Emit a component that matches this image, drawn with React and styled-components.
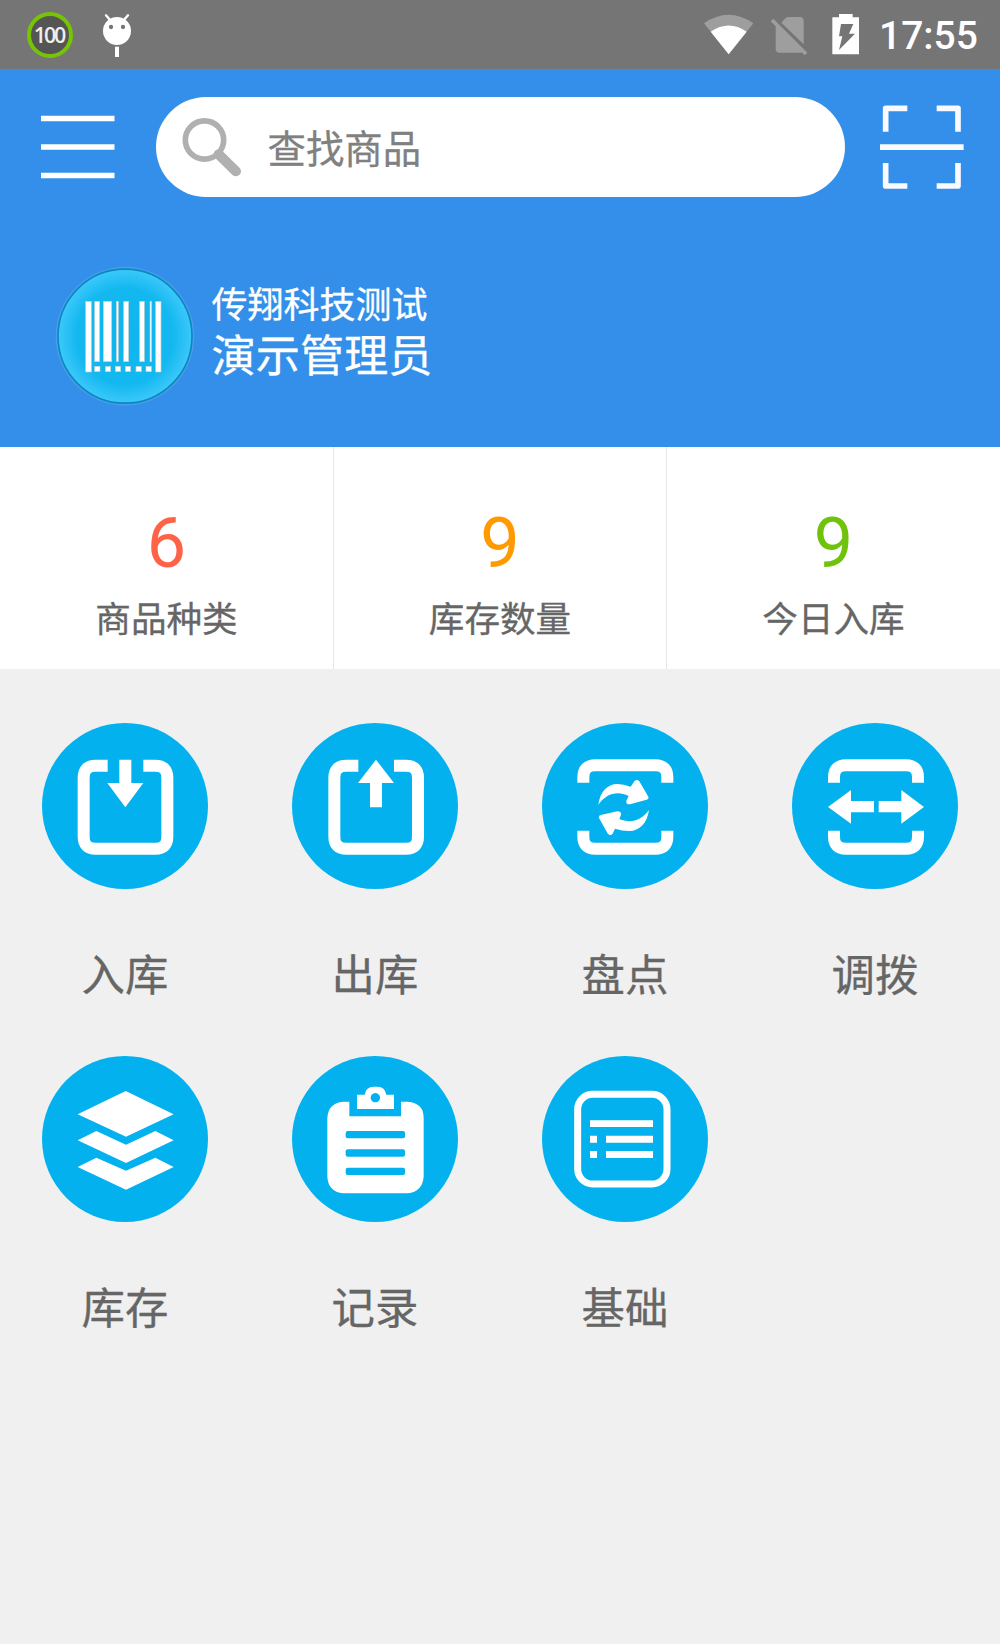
import React from "react";
import styled, { createGlobalStyle } from "styled-components";

const GlobalStyle = createGlobalStyle`
  * {
    box-sizing: border-box;
  }
  body {
    margin: 0;
    background: #f0f0f0;
    font-family: Roboto, "Noto Sans CJK SC", sans-serif;
  }
  svg {
    display: block;
    flex: none;
  }
`;

const colorPrimary = "#338fe9";
const colorIcon = "#02b1ee";
const colorText = "#666";

const Screen = styled.div`
  width: 1000px;
  height: 1644px;
  overflow: hidden;
  background: #f0f0f0;
`;

const StatusBar = styled.div`
  display: flex;
  align-items: center;
  justify-content: space-between;
  height: 69px;
  padding: 0 22px 0 27px;
  background: #757575;
`;

const StatusGroup = styled.div`
  display: flex;
  align-items: center;
  gap: ${(p) => p.$gap}px;
`;

const Percent = styled.div`
  display: flex;
  align-items: center;
  justify-content: center;
  width: 46px;
  height: 46px;
  padding-right: 2px;
  border: 4px solid #76c403;
  border-radius: 50%;
  background: #555;
  color: #eee;
  font: 600 21.5px/1 "Open Sans", sans-serif;
  letter-spacing: -2.2px;
`;

const Clock = styled.span`
  width: 99px;
  padding-top: 3px;
  color: #fff;
  font-size: 39px;
  font-weight: 500;
  line-height: 68px;
  white-space: nowrap;
`;

const Header = styled.header`
  height: 378px;
  padding: 28px 36px 0 41px;
  background: ${colorPrimary};
`;

const Toolbar = styled.div`
  display: flex;
  align-items: center;
  justify-content: space-between;
  height: 100px;
`;

const Search = styled.div`
  display: flex;
  align-items: center;
  width: 689px;
  height: 100px;
  margin-left: 5px;
  padding-left: 26px;
  border-radius: 50px;
  background: #fff;
`;

const SearchText = styled.span`
  margin-left: 26px;
  padding-top: 6px;
  color: #808080;
  font-size: 38.4px;
  line-height: 50px;
  -webkit-text-stroke: 0.3px;
`;

const Profile = styled.div`
  display: flex;
  align-items: center;
  margin-top: 69px;
  margin-left: 14px;
`;

const ProfileInfo = styled.div`
  display: flex;
  flex-direction: column;
  margin-left: 16.5px;
  padding-bottom: 5px;
  color: #fff;
  -webkit-text-stroke: 0.3px;
`;

const Company = styled.span`
  font-size: 36px;
  line-height: 46px;
`;

const UserName = styled.span`
  font-size: 44.2px;
  line-height: 56px;
`;

const Stats = styled.section`
  display: grid;
  grid-template-columns: 334px 333px 333px;
  height: 222px;
  background: #fff;
`;

const Stat = styled.div`
  display: flex;
  flex-direction: column;
  align-items: center;
  padding-top: 55px;
  border-right: 1px solid #e6e6e6;

  &:last-child {
    border-right: 0;
  }
`;

const StatValue = styled.span`
  color: ${(p) => p.$color};
  font-size: 70px;
  line-height: 82px;
`;

const StatLabel = styled.span`
  margin-top: 11px;
  color: ${colorText};
  font-size: 35.6px;
  line-height: 50px;
  -webkit-text-stroke: 0.3px;
`;

const Menu = styled.main`
  display: grid;
  grid-template-columns: repeat(4, 250px);
  grid-auto-rows: 332.5px;
  padding-top: 54px;
`;

const MenuItem = styled.div`
  display: flex;
  flex-direction: column;
  align-items: center;
`;

const Circle = styled.div`
  width: 166px;
  height: 166px;
  border-radius: 50%;
  background: ${colorIcon};
`;

const MenuLabel = styled.span`
  margin-top: 58px;
  color: ${colorText};
  font-size: 43.4px;
  line-height: 60px;
  -webkit-text-stroke: 0.3px;
`;

const AndroidIcon = () => (
  <svg width="30" height="69" viewBox="305 0 90 207">
    <g fill="#fff">
      <circle cx="350" cy="93" r="42" />
      <path d="M344 140h12v31h-12z" />
    </g>
    <path d="M317 46l13 15M383 46l-13 15" stroke="#fff" strokeWidth="7" strokeLinecap="round" />
    <circle cx="332" cy="81" r="6.5" fill="#757575" />
    <circle cx="368" cy="81" r="6.5" fill="#757575" />
  </svg>
);

const WifiIcon = () => (
  <svg width="50" height="69" viewBox="74 0 150 207">
    <path d="M148 163L74 70q74-51 148 0z" fill="#9e9e9e" />
    <path d="M148 163L94 95q54-37 108 0z" fill="#fff" />
  </svg>
);

const NoSimIcon = () => (
  <svg width="38" height="69" viewBox="270 0 114 207">
    <g fill="#9e9e9e">
      <path d="M304 68L317 54q4-3 9-3h33q12 0 12 12v70z" />
      <path d="M287 71l83 83q-4 4-9 4h-62q-12 0-12-12z" />
      <path d="M272 64l8-8 102 102-8 8z" />
    </g>
  </svg>
);

const BatteryIcon = () => (
  <svg width="27" height="69" viewBox="456 0 81 207">
    <path d="M457 52h20V42h41v10h19v111h-80z" fill="#fff" />
    <path d="M483 72h37l-13 29h18l-48 49 10-41h-10z" fill="#757575" />
  </svg>
);

const MenuIcon = () => (
  <svg width="74" height="66" viewBox="0 0 74 66">
    <path d="M0 4.5h73.5M0 33h73.5M0 61.5h73.5" stroke="#fff" strokeWidth="5.6" />
  </svg>
);

const SearchIcon = () => (
  <svg width="60" height="60" viewBox="544 350 180 180" fill="none" stroke="#b0b0b0">
    <circle cx="611.5" cy="419" r="57.5" strokeWidth="17" />
    <path d="M654 462l52 51" strokeWidth="30" strokeLinecap="round" />
  </svg>
);

const ScanIcon = () => (
  <svg width="84" height="84" viewBox="601 315 252 252" fill="none" stroke="#f8faff" strokeWidth="17" strokeLinejoin="round">
    <path d="M683 325h-65v70M771 325h64v70M683 558h-65v-69M771 558h64v-69" />
    <path d="M601 441.5h251" />
  </svg>
);

const bars = [
  [137, 17, 212],
  [164, 15, 181],
  [190, 25, 181],
  [229, 6, 181],
  [251, 15, 181],
  [299, 14, 181],
  [330, 5, 181],
  [347, 16, 212],
];

const dots = [164, 196, 226, 256, 288, 318];

const Barcode = () => (
  <svg width="140" height="140" viewBox="45 47 420 420">
    <defs>
      <radialGradient id="disc">
        <stop offset="0" stopColor="#0fb5ee" />
        <stop offset="0.72" stopColor="#13b8f0" />
        <stop offset="1" stopColor="#3dc8fa" />
      </radialGradient>
    </defs>
    <circle cx="255" cy="257.5" r="208" fill="#4b9cec" />
    <circle cx="255" cy="257.5" r="201" fill="url(#disc)" stroke="#078abf" strokeWidth="5" />
    <g fill="#fff" stroke="#b9cfd4" strokeWidth="2">
      {bars.map(([x, w, h]) => (
        <rect key={x} x={x} y="153" width={w} height={h} />
      ))}
      {dots.map((x) => (
        <rect key={x} x={x} y="348" width="16" height="16" />
      ))}
    </g>
  </svg>
);

const Glyph = ({ top = 39, children }) => (
  <svg width="166" height="166" viewBox={`36 ${top} 498 498`} fill="#fff">
    {children}
  </svg>
);

const OpenBox = () => (
  <path
    d="M233 167H197q-36 0-36 36v177q0 36 36 36h179q36 0 36-36V203q0-36-36-36H340"
    fill="none"
    stroke="#fff"
    strokeWidth="36"
  />
);

const Brackets = () => (
  <path
    d="M160 218V202q0-36 36-36h180q36 0 36 36v16M160 362v18q0 36 36 36h180q36 0 36-36v-18"
    fill="none"
    stroke="#fff"
    strokeWidth="36"
  />
);

const InIcon = () => (
  <Glyph>
    <OpenBox />
    <path d="M268 149h36v70h36l-54 73-54-73h36z" />
  </Glyph>
);

const OutIcon = () => (
  <Glyph>
    <g transform="translate(2 0)">
      <OpenBox />
      <path d="M286 149l54 70h-36v73h-36v-73h-36z" />
    </g>
  </Glyph>
);

const CheckIcon = () => (
  <Glyph>
    <Brackets />
    <path d="M205 284C210 246 232 222 262 222Q282 222 302 230L313 214Q320 206 328 214L355 260Q357 267 350 269L300 283Q287 284 289 272L296 258C262 242 230 250 205 284z" />
    <path d="M357 300C351 340 329 363 298 363Q275 363 255 356L248 371Q242 379 234 372L207 324Q205 317 212 315L262 304Q275 304 273 315L268 327C302 341 334 332 357 300z" />
  </Glyph>
);

const TransferIcon = () => (
  <Glyph top={37}>
    <g transform="translate(2 -2)">
      <Brackets />
      <path d="M142 291l69-51v33h69v34h-69v34zM430 291l-68-51v33h-68v34h68v34z" />
    </g>
  </Glyph>
);

const StockIcon = () => (
  <Glyph top={31}>
    <path d="M287 136l144 70-143 67-145-67z" />
    <path d="M143 284l56-28 89 41 88-41 55 28-143 68z" />
    <path d="M143 364l56-28 89 39 88-39 55 28-143 68z" />
  </Glyph>
);

const RecordIcon = () => (
  <Glyph top={31}>
    <path d="M189 168h19v44h155v-44h20q48 4 48 48v178q-4 44-48 49H189q-44-5-47-49V216q3-44 47-48z" />
    <path
      fillRule="evenodd"
      d="M231 147h23q4-24 27-24h11q23 0 27 24h23v43H231zM286 142a14 14 0 1 0 .1 0z"
    />
    <g fill={colorIcon}>
      <rect x="197" y="256" width="178" height="22" rx="6" />
      <rect x="197" y="311" width="178" height="22" rx="6" />
      <rect x="197" y="366" width="178" height="22" rx="6" />
    </g>
  </Glyph>
);

const BasicIcon = () => (
  <Glyph top={33}>
    <rect x="143" y="148" width="268" height="269" rx="45" fill="none" stroke="#fff" strokeWidth="21" />
    <path d="M180 226h189v20H180zM180 272h21v21h-21zM228 272h141v21H228zM180 318h21v21h-21zM228 318h141v21H228z" />
  </Glyph>
);

const stats = [
  { value: 6, label: "商品种类", color: "#ff6347" },
  { value: 9, label: "库存数量", color: "#ff9900" },
  { value: 9, label: "今日入库", color: "#6fc30b" },
];

const menu = [
  { label: "入库", Icon: InIcon },
  { label: "出库", Icon: OutIcon },
  { label: "盘点", Icon: CheckIcon },
  { label: "调拨", Icon: TransferIcon },
  { label: "库存", Icon: StockIcon },
  { label: "记录", Icon: RecordIcon },
  { label: "基础", Icon: BasicIcon },
];

const App = () => {
  return (
    <Screen lang="zh-CN">
      <GlobalStyle />
      <StatusBar>
        <StatusGroup $gap={29}>
          <Percent>100</Percent>
          <AndroidIcon />
        </StatusGroup>
        <StatusGroup $gap={20}>
          <StatusGroup $gap={24}>
            <StatusGroup $gap={16}>
              <WifiIcon />
              <NoSimIcon />
            </StatusGroup>
            <BatteryIcon />
          </StatusGroup>
          <Clock>17:55</Clock>
        </StatusGroup>
      </StatusBar>
      <Header>
        <Toolbar>
          <MenuIcon />
          <Search>
            <SearchIcon />
            <SearchText>查找商品</SearchText>
          </Search>
          <ScanIcon />
        </Toolbar>
        <Profile>
          <Barcode />
          <ProfileInfo>
            <Company>传翔科技测试</Company>
            <UserName>演示管理员</UserName>
          </ProfileInfo>
        </Profile>
      </Header>
      <Stats>
        {stats.map((s) => (
          <Stat key={s.label}>
            <StatValue $color={s.color}>{s.value}</StatValue>
            <StatLabel>{s.label}</StatLabel>
          </Stat>
        ))}
      </Stats>
      <Menu>
        {menu.map(({ label, Icon }) => (
          <MenuItem key={label}>
            <Circle>
              <Icon />
            </Circle>
            <MenuLabel>{label}</MenuLabel>
          </MenuItem>
        ))}
      </Menu>
    </Screen>
  );
};

export default App;
